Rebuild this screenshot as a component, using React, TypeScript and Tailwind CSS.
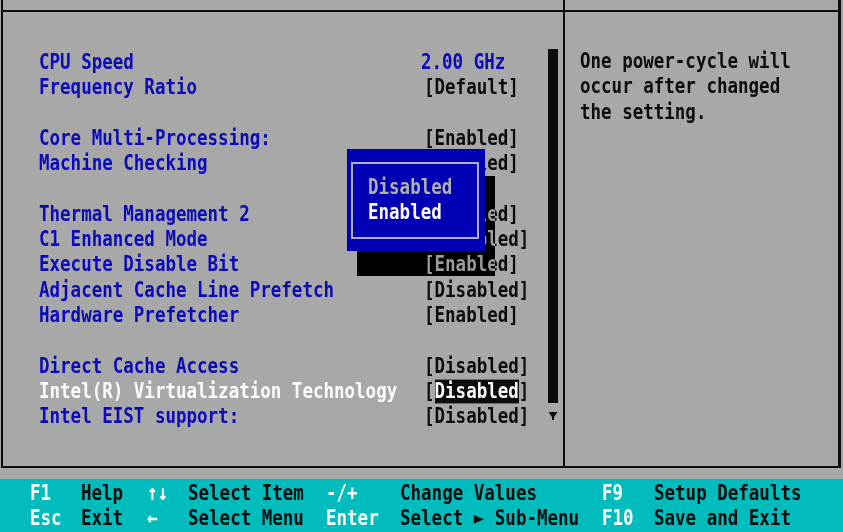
import React from 'react';

type Row = { label: string; value: string; blue?: boolean; selected?: boolean } | null;

const rows: Row[] = [
  { label: 'CPU Speed', value: '2.00 GHz', blue: true },
  { label: 'Frequency Ratio', value: '[Default]' },
  null,
  { label: 'Core Multi-Processing:', value: '[Enabled]' },
  { label: 'Machine Checking', value: '[Enabled]' },
  null,
  { label: 'Thermal Management 2', value: '[Enabled]' },
  { label: 'C1 Enhanced Mode', value: '[Disabled]' },
  { label: 'Execute Disable Bit', value: '[Enabled]' },
  { label: 'Adjacent Cache Line Prefetch', value: '[Disabled]' },
  { label: 'Hardware Prefetcher', value: '[Enabled]' },
  null,
  { label: 'Direct Cache Access', value: '[Disabled]' },
  { label: 'Intel(R) Virtualization Technology', value: '[Disabled]', selected: true },
  { label: 'Intel EIST support:', value: '[Disabled]' },
];

function T({ children, className = '' }: { children: React.ReactNode; className?: string }) {
  return <span className={`inline-block scale-y-125 leading-[19px] whitespace-pre ${className}`}>{children}</span>;
}

function BarRow({ items }: { items: [string, boolean][] }) {
  return (
    <div className="grid grid-cols-[51px_66px_41px_138px_74px_202px_52px_1fr] pl-[30px] h-[25px] items-center">
      {items.map(([t, key], i) => (
        <div key={i}>
          <T className={key ? 'text-[#fcfcfc]' : 'text-[#0c0c0c]'}>{t}</T>
        </div>
      ))}
    </div>
  );
}

export default function App() {
  return (
    <div className="relative w-[843px] h-[532px] bg-[#a8a8a8] flex flex-col overflow-hidden font-['DejaVu_Sans_Mono','Liberation_Mono',monospace] font-bold text-[17.5px]">
      <div className="h-[479px] pl-[1px] pr-[2px]">
        <div className="h-[468px] flex border-l-2 border-r-[3px] border-b-2 border-[#0c0c0c]">
          {/* left column */}
          <div className="w-[562px] flex flex-col border-r-2 border-[#0c0c0c]">
            <div className="h-[10px]" />
            <div className="flex-1 flex border-t-2 border-[#0c0c0c]">
              <div className="flex-1 pl-[36px] pt-[37px]">
                {rows.map((r, i) =>
                  r === null ? (
                    <div key={i} className="h-[25.3px]" />
                  ) : (
                    <div key={i} className="grid grid-cols-[385px_1fr] h-[25.3px] items-center">
                      <div>
                        <T className={r.selected ? 'text-[#fcfcfc]' : 'text-[#0a0ab8]'}>{r.label}</T>
                      </div>
                      <div>
                        {r.selected ? (
                          <T className="text-[#0c0c0c]">
                            [<span className="inline-block leading-[19px] bg-[#0c0c0c] text-[#fcfcfc]">Disabled</span>]
                          </T>
                        ) : r.blue ? (
                          <T className="text-[#0a0ab8] -ml-[3px]">{r.value}</T>
                        ) : (
                          <T className="text-[#0c0c0c]">{r.value}</T>
                        )}
                      </div>
                    </div>
                  )
                )}
              </div>
              {/* scrollbar */}
              <div className="w-[10px] mr-[5px] pt-[37px] flex flex-col items-center">
                <div className="w-[10px] h-[354px] bg-[#0c0c0c]" />
                <svg width="10" height="10" viewBox="0 0 10 10" className="mt-[8px]">
                  <polygon points="0.5,1 9.5,1 5,7.5" fill="#0c0c0c" />
                  <rect x="4" y="6" width="2" height="3" fill="#0c0c0c" />
                </svg>
              </div>
            </div>
          </div>
          {/* right column */}
          <div className="flex-1 flex flex-col">
            <div className="h-[10px]" />
            <div className="flex-1 border-t-2 border-[#0c0c0c] pl-[15px] pt-[37px] text-[#0c0c0c]">
              {['One power-cycle will', 'occur after changed', 'the setting.'].map((l, i) => (
                <div key={i} className="h-[25.3px] flex items-center">
                  <T>{l}</T>
                </div>
              ))}
            </div>
          </div>
        </div>
      </div>

      {/* bottom key bar */}
      <div className="flex-1 bg-[#00bcbc] pt-[1px]">
        <BarRow
          items={[
            ['F1', true],
            ['Help', false],
            ['↑↓', true],
            ['Select Item', false],
            ['-/+', true],
            ['Change Values', false],
            ['F9', true],
            ['Setup Defaults', false],
          ]}
        />
        <BarRow
          items={[
            ['Esc', true],
            ['Exit', false],
            ['←', true],
            ['Select Menu', false],
            ['Enter', true],
            ['Select ► Sub-Menu', false],
            ['F10', true],
            ['Save and Exit', false],
          ]}
        />
      </div>

      {/* popup shadow */}
      <div className="absolute left-[357px] top-[176px] w-[138px] h-[100px] bg-[#a8a8a8] mix-blend-difference" />
      {/* popup */}
      <div className="absolute left-[347px] top-[149px] w-[138px] h-[102px] bg-[#0000b4] pl-[4px] pt-[13px]">
        <div className="w-[128px] h-[77px] border-2 border-[#b0b0b0] pl-[15px] pt-[11px]">
          <div className="h-[25.3px] flex items-center">
            <T className="text-[#b0b0b0]">Disabled</T>
          </div>
          <div className="h-[25.3px] flex items-center">
            <T className="text-[#fcfcfc]">Enabled</T>
          </div>
        </div>
      </div>
    </div>
  );
}
